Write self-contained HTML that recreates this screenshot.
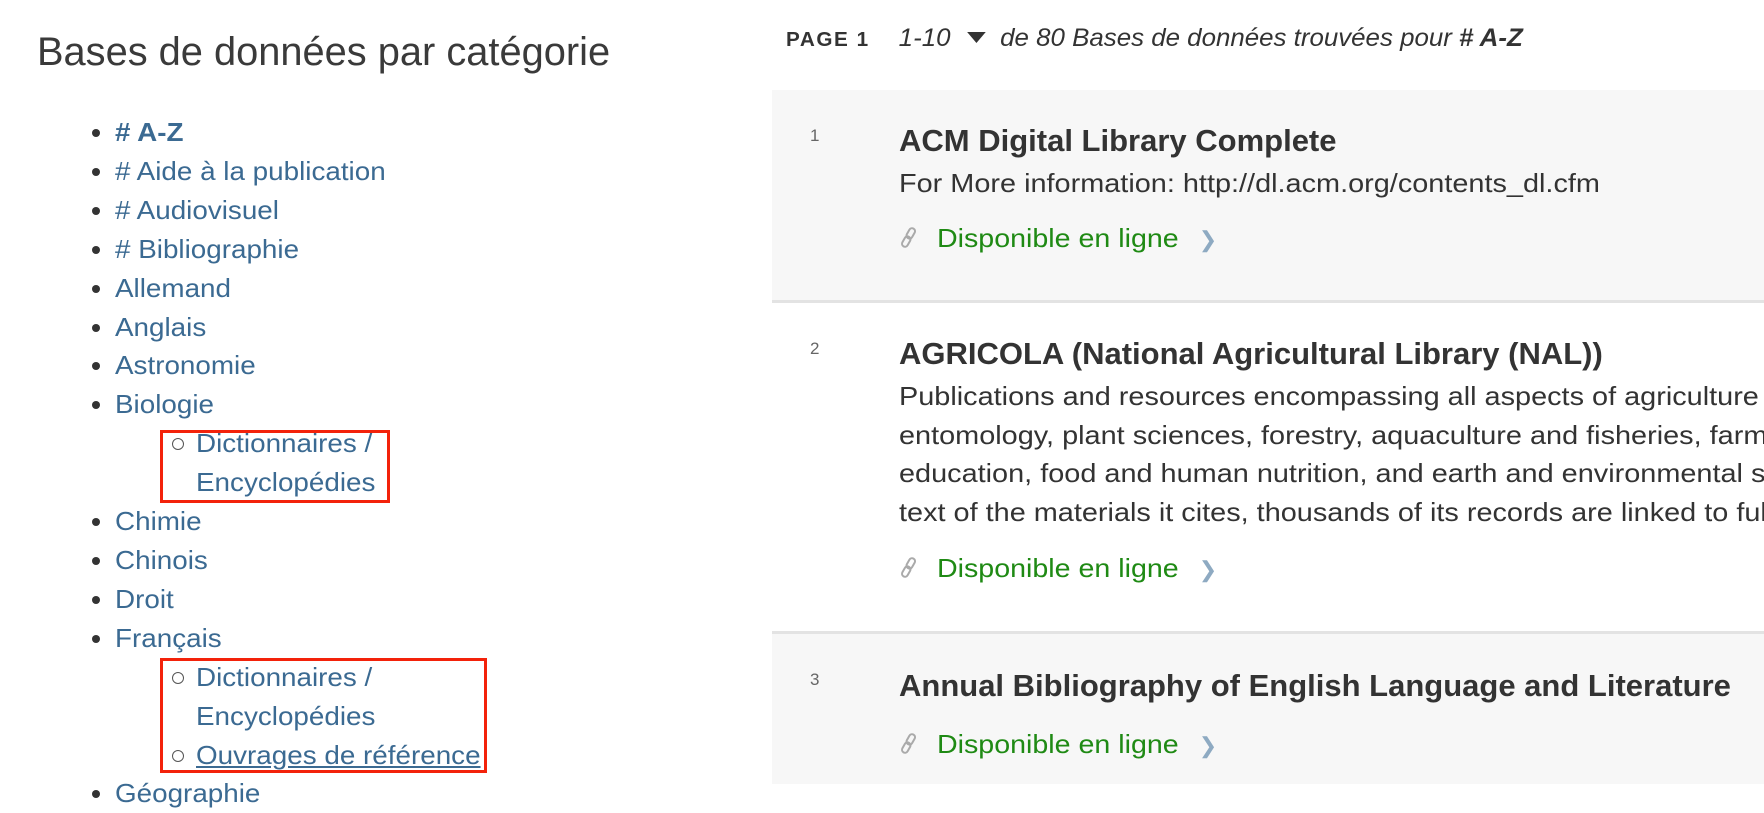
<!DOCTYPE html>
<html><head><meta charset="utf-8"><style>
*{margin:0;padding:0;box-sizing:border-box}
body{width:1764px;height:784px;overflow:hidden;background:#fff;font-family:"Liberation Sans",sans-serif;position:relative}
h1{position:absolute;left:37px;top:30px;font-weight:300;font-size:40px;color:#3a3a3a;white-space:nowrap;transform:scaleX(0.995);transform-origin:left}
ul.l{position:absolute;left:115px;top:113px;list-style:none;font-size:26px;line-height:38.9px;color:#3b6a92}
ul.l li{position:relative;white-space:nowrap}
ul.l li span{display:inline-block;transform:scaleX(1.07);transform-origin:left}
ul.l>li:before{content:"";position:absolute;left:-23px;top:16px;width:8px;height:8px;border-radius:50%;background:#333}
ul.s{list-style:none;margin-left:81px}
ul.s li:before{content:"";position:absolute;left:-24px;top:14px;width:10px;height:10px;border-radius:50%;border:1px solid #555}
.box{position:absolute;border:3px solid #f3220a}
.hdr{position:absolute;top:24px;left:786px;font-size:25px;color:#333;white-space:nowrap;transform:scaleX(1.035);transform-origin:left}
.hdr b.p{font-size:20px;letter-spacing:1.5px;margin-right:28px}
.hdr i{font-style:italic}
.tri{display:inline-block;width:0;height:0;border-left:9px solid transparent;border-right:9px solid transparent;border-top:11px solid #333;margin:0 14px 3px 16px}
.rec{position:absolute;left:772px;width:992px;overflow:hidden}
.g{background:#f7f7f7}
.line{position:absolute;left:772px;width:992px;height:3px;background:#e3e3e3}
.n{position:absolute;left:38px;font-size:17px;color:#666}
.t{position:absolute;left:127px;font-size:31px;font-weight:bold;color:#333;white-space:nowrap}
.d{position:absolute;left:127px;font-size:26px;color:#333;line-height:38.6px;white-space:nowrap;transform:scaleX(1.11);transform-origin:left}
.a{position:absolute;left:127px;font-size:26px;color:#1f8a14;white-space:nowrap}
.a svg{vertical-align:-2px;margin-right:18px}
.a .x{display:inline-block;transform:scaleX(1.1);transform-origin:left}
.a .c{color:#8eaac2;margin-left:42px;font-size:22px}
</style></head><body>
<h1>Bases de données par catégorie</h1>
<ul class="l">
<li><span><b># A-Z</b></span></li>
<li><span># Aide à la publication</span></li>
<li><span># Audiovisuel</span></li>
<li><span># Bibliographie</span></li>
<li><span>Allemand</span></li>
<li><span>Anglais</span></li>
<li><span>Astronomie</span></li>
<li><span>Biologie</span><ul class="s"><li><span>Dictionnaires /<br>Encyclopédies</span></li></ul></li>
<li><span>Chimie</span></li>
<li><span>Chinois</span></li>
<li><span>Droit</span></li>
<li><span>Français</span><ul class="s"><li><span>Dictionnaires /<br>Encyclopédies</span></li><li><span style="text-decoration:underline">Ouvrages de référence</span></li></ul></li>
<li><span>Géographie</span></li>
</ul>
<div class="box" style="left:160px;top:430px;width:230px;height:73px"></div>
<div class="box" style="left:160px;top:658px;width:327px;height:115px"></div>

<div class="hdr"><b class="p">PAGE 1</b><i>1-10</i><span class="tri"></span><i>de 80 Bases de données trouvées pour <b># A-Z</b></i></div>

<div class="rec g" style="top:90px;height:211px">
<div class="n" style="top:36px">1</div>
<div class="t" style="top:33px">ACM Digital Library Complete</div>
<div class="d" style="top:74px">For More information: http://dl.acm.org/contents_dl.cfm</div>
<div class="a" style="top:133px"><svg width="20" height="22" viewBox="0 0 20 22"><g fill="none" stroke="#aaa" stroke-width="2"><rect x="9" y="1" width="6" height="11" rx="3" transform="rotate(30 12 6)"/><rect x="4" y="9" width="6" height="11" rx="3" transform="rotate(30 7 15)"/></g></svg><span class="x">Disponible en ligne</span><span class="c">❯</span></div>
</div>
<div class="line" style="top:300px"></div>
<div class="rec" style="top:303px;height:330px">
<div class="n" style="top:36px">2</div>
<div class="t" style="top:33px">AGRICOLA (National Agricultural Library (NAL))</div>
<div class="d" style="top:74px">Publications and resources encompassing all aspects of agriculture and allied disciplines, including<br>entomology, plant sciences, forestry, aquaculture and fisheries, farming and farming systems, agricultural<br>education, food and human nutrition, and earth and environmental sciences. Although it does not contain the<br>text of the materials it cites, thousands of its records are linked to full-text</div>
<div class="a" style="top:250px"><svg width="20" height="22" viewBox="0 0 20 22"><g fill="none" stroke="#aaa" stroke-width="2"><rect x="9" y="1" width="6" height="11" rx="3" transform="rotate(30 12 6)"/><rect x="4" y="9" width="6" height="11" rx="3" transform="rotate(30 7 15)"/></g></svg><span class="x">Disponible en ligne</span><span class="c">❯</span></div>
</div>
<div class="line" style="top:631px"></div>
<div class="rec g" style="top:634px;height:150px">
<div class="n" style="top:36px">3</div>
<div class="t" style="top:34px">Annual Bibliography of English Language and Literature</div>
<div class="a" style="top:95px"><svg width="20" height="22" viewBox="0 0 20 22"><g fill="none" stroke="#aaa" stroke-width="2"><rect x="9" y="1" width="6" height="11" rx="3" transform="rotate(30 12 6)"/><rect x="4" y="9" width="6" height="11" rx="3" transform="rotate(30 7 15)"/></g></svg><span class="x">Disponible en ligne</span><span class="c">❯</span></div>
</div>
</body></html>
